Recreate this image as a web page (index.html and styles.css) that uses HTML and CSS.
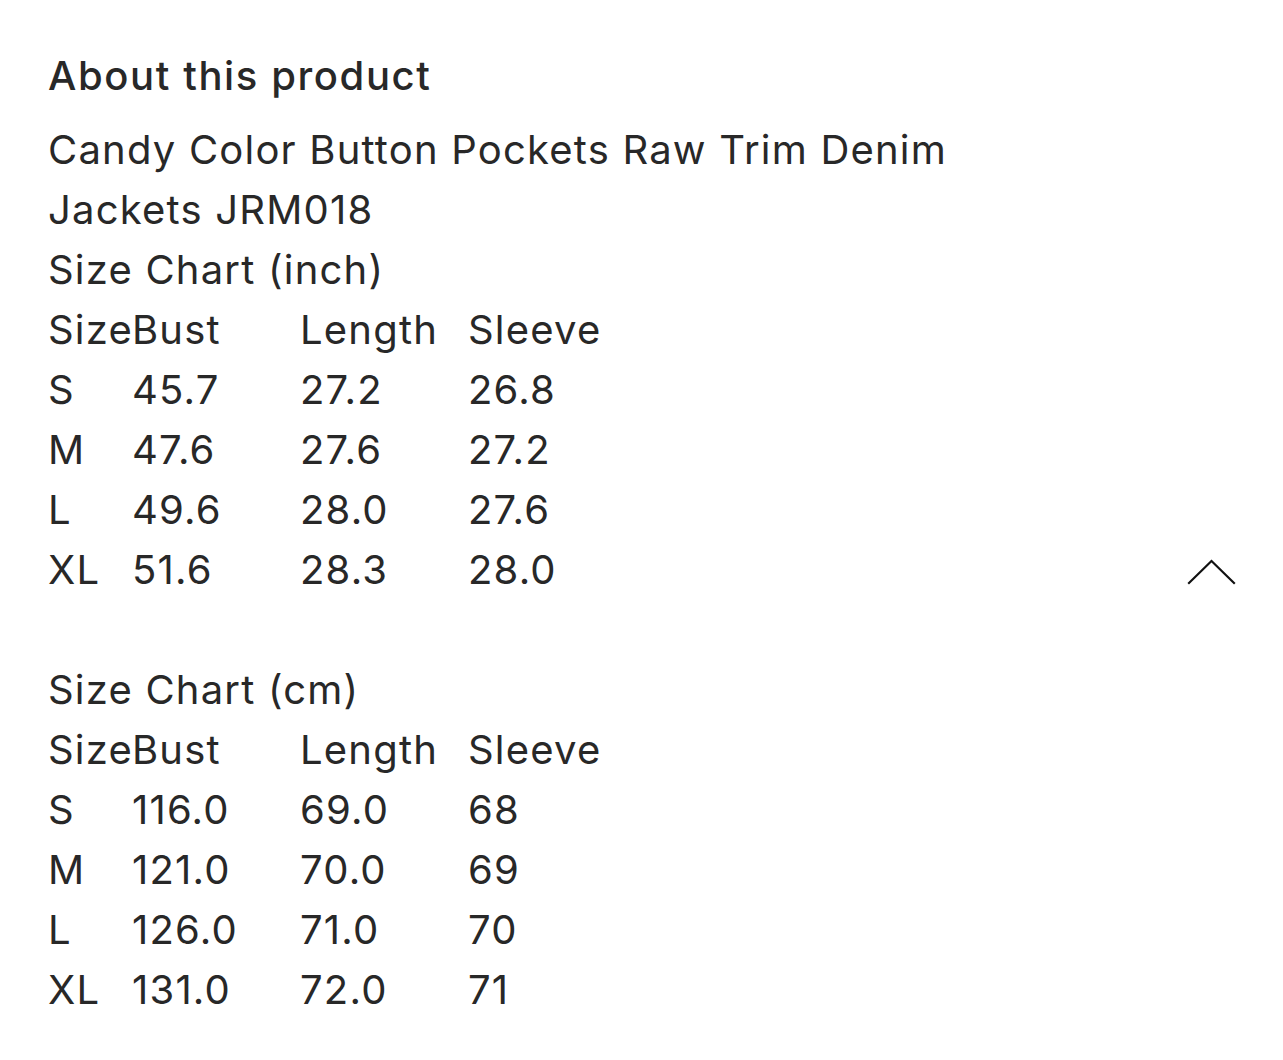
FILE: index.html
```html
<!DOCTYPE html>
<html lang="en">
<head>
<meta charset="utf-8">
<title>About this product</title>
<link rel="stylesheet" href="styles.css">
</head>
<body>
<section class="panel">
  <h2 class="title">About this product</h2>
  <div class="desc">
    <p class="line">Candy Color Button Pockets Raw Trim Denim Jackets JRM018</p>
    <p class="line">Size Chart (inch)</p>
    <div class="chart">
      <span>Size</span><span>Bust</span><span>Length</span><span>Sleeve</span>
      <span>S</span><span>45.7</span><span>27.2</span><span>26.8</span>
      <span>M</span><span>47.6</span><span>27.6</span><span>27.2</span>
      <span>L</span><span>49.6</span><span>28.0</span><span>27.6</span>
      <span>XL</span><span>51.6</span><span>28.3</span><span>28.0</span>
    </div>
    <p class="line blank">&nbsp;</p>
    <p class="line">Size Chart (cm)</p>
    <div class="chart">
      <span>Size</span><span>Bust</span><span>Length</span><span>Sleeve</span>
      <span>S</span><span>116.0</span><span>69.0</span><span>68</span>
      <span>M</span><span>121.0</span><span>70.0</span><span>69</span>
      <span>L</span><span>126.0</span><span>71.0</span><span>70</span>
      <span>XL</span><span>131.0</span><span>72.0</span><span>71</span>
    </div>
  </div>
  <button class="toggle" aria-label="Collapse">
    <svg width="50" height="28" viewBox="0 0 50 28" fill="none" stroke="#111" stroke-width="2.2" stroke-linecap="square" stroke-linejoin="miter">
      <path d="M2 25 L24.5 3 L47 25"/>
    </svg>
  </button>
</section>
</body>
</html>
```
FILE: styles.css
```css
html, body {
  margin: 0;
  padding: 0;
  background: #ffffff;
}
body {
  font-family: Inter, "Noto Sans", "Liberation Sans", sans-serif;
  color: #282828;
}
.panel {
  position: relative;
  padding: 47px 0 0 48px;
  width: 1235px;
  box-sizing: border-box;
  min-height: 1060px;
}
.title {
  margin: 0;
  font-size: 40px;
  line-height: 58px;
  font-weight: 500;
  letter-spacing: 1.6px;
}
.desc {
  margin-top: 15px;
  width: 960px;
  font-size: 40px;
  line-height: 60px;
  font-weight: 400;
  letter-spacing: 1.2px;
}
.line {
  margin: 0;
}
.chart {
  display: grid;
  grid-template-columns: 84px 168px 168px auto;
}
.chart span {
  white-space: nowrap;
}
.toggle {
  position: absolute;
  left: 1187px;
  top: 558px;
  padding: 0;
  margin: 0;
  border: 0;
  background: transparent;
  cursor: pointer;
  line-height: 0;
}
```
